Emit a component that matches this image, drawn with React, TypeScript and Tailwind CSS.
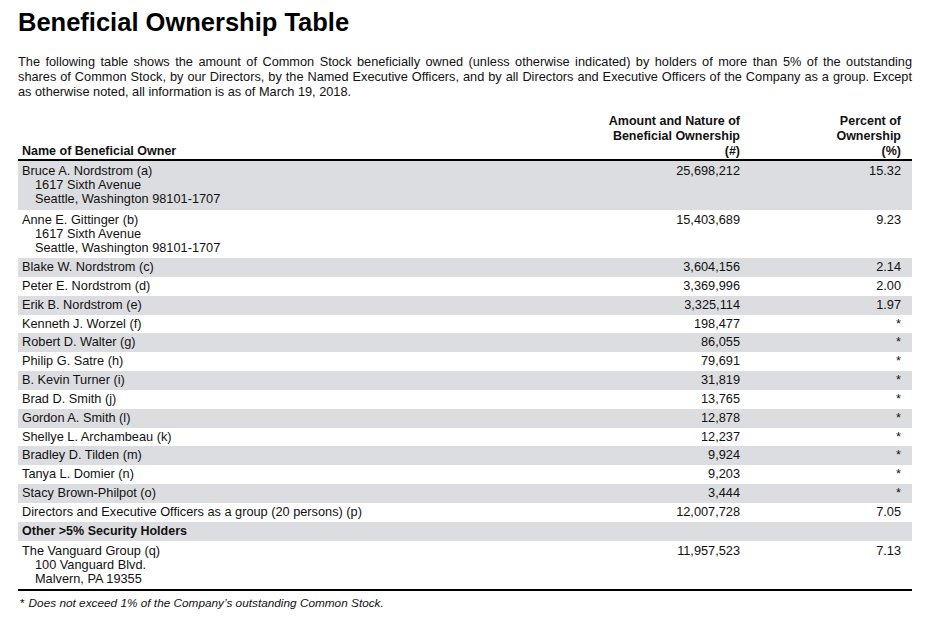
type Row = {
  name: string;
  address?: string[];
  amount?: string;
  percent?: string;
  section?: boolean;
};

const rows: Row[] = [
  {
    name: "Bruce A. Nordstrom (a)",
    address: ["1617 Sixth Avenue", "Seattle, Washington 98101-1707"],
    amount: "25,698,212",
    percent: "15.32",
  },
  {
    name: "Anne E. Gittinger (b)",
    address: ["1617 Sixth Avenue", "Seattle, Washington 98101-1707"],
    amount: "15,403,689",
    percent: "9.23",
  },
  { name: "Blake W. Nordstrom (c)", amount: "3,604,156", percent: "2.14" },
  { name: "Peter E. Nordstrom (d)", amount: "3,369,996", percent: "2.00" },
  { name: "Erik B. Nordstrom (e)", amount: "3,325,114", percent: "1.97" },
  { name: "Kenneth J. Worzel (f)", amount: "198,477", percent: "*" },
  { name: "Robert D. Walter (g)", amount: "86,055", percent: "*" },
  { name: "Philip G. Satre (h)", amount: "79,691", percent: "*" },
  { name: "B. Kevin Turner (i)", amount: "31,819", percent: "*" },
  { name: "Brad D. Smith (j)", amount: "13,765", percent: "*" },
  { name: "Gordon A. Smith (l)", amount: "12,878", percent: "*" },
  { name: "Shellye L. Archambeau (k)", amount: "12,237", percent: "*" },
  { name: "Bradley D. Tilden (m)", amount: "9,924", percent: "*" },
  { name: "Tanya L. Domier (n)", amount: "9,203", percent: "*" },
  { name: "Stacy Brown-Philpot (o)", amount: "3,444", percent: "*" },
  {
    name: "Directors and Executive Officers as a group (20 persons) (p)",
    amount: "12,007,728",
    percent: "7.05",
  },
  { name: "Other >5% Security Holders", section: true },
  {
    name: "The Vanguard Group (q)",
    address: ["100 Vanguard Blvd.", "Malvern, PA 19355"],
    amount: "11,957,523",
    percent: "7.13",
  },
];

const TableRow = ({ row, shaded }: { row: Row; shaded: boolean }) => {
  const bg = shaded ? "bg-[#dcdde0]" : "bg-white";

  if (row.address) {
    return (
      <div
        className={`grid grid-cols-[1fr_160px_161px] h-[48.5px] pl-[4px] pr-[11px] pt-[3px] text-[12.75px] leading-[14px] ${bg}`}
      >
        <div>
          <div>{row.name}</div>
          {row.address.map((line) => (
            <div key={line} className="pl-[13px]">
              {line}
            </div>
          ))}
        </div>
        <div className="text-right">{row.amount}</div>
        <div className="text-right">{row.percent}</div>
      </div>
    );
  }

  return (
    <div
      className={`grid grid-cols-[1fr_160px_161px] h-[18.85px] items-center pl-[4px] pr-[11px] leading-[18.85px] ${
        row.section ? "text-[12.5px] font-bold" : "text-[12.75px]"
      } ${bg}`}
    >
      <div className="whitespace-nowrap">{row.name}</div>
      <div className="text-right">{row.amount}</div>
      <div className="text-right">{row.percent}</div>
    </div>
  );
};

export default function App() {
  return (
    <div className="w-[934px] h-[622px] bg-white text-[#111] pl-[18px] pr-[22px] pt-[7px] font-['Liberation_Sans',Arial,sans-serif]">
      <h1 className="text-[25.5px] leading-[30px] font-bold text-black">
        Beneficial Ownership Table
      </h1>

      <p className="mt-[17px] text-[12.75px] leading-[15px] text-justify">
        <span className="block [text-align-last:justify]">
          The following table shows the amount of Common Stock beneficially
          owned (unless otherwise indicated) by holders of more than 5% of the
          outstanding
        </span>
        <span className="block [text-align-last:justify]">
          shares of Common Stock, by our Directors, by the Named Executive
          Officers, and by all Directors and Executive Officers of the Company
          as a group. Except
        </span>
        <span className="block">
          as otherwise noted, all information is as of March 19, 2018.
        </span>
      </p>

      <div className="mt-[15px]">
        <div className="grid grid-cols-[1fr_160px_161px] items-end pl-[4px] pr-[11px] border-b-2 border-black text-[12.5px] leading-[15px] font-bold">
          <div>Name of Beneficial Owner</div>
          <div className="text-right">
            Amount and Nature of
            <br />
            Beneficial Ownership
            <br />
            (#)
          </div>
          <div className="text-right">
            Percent of
            <br />
            Ownership
            <br />
            (%)
          </div>
        </div>

        {rows.map((row, i) => (
          <TableRow key={row.name} row={row} shaded={i % 2 === 0} />
        ))}

        <div className="h-[2px] bg-black" />
      </div>

      <p className="mt-[5px] pl-[2px] text-[11.8px] leading-[14px]">
        <span>*</span>
        <span className="ml-[4px] italic">
          Does not exceed 1% of the Company’s outstanding Common Stock.
        </span>
      </p>
    </div>
  );
}
